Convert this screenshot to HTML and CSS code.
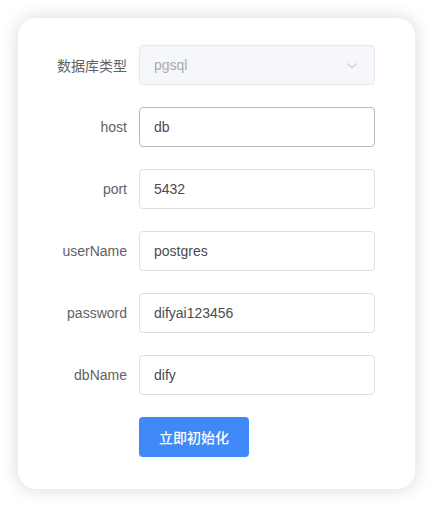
FILE: index.html
```html
<!DOCTYPE html>
<html lang="zh">
<head>
<meta charset="utf-8">
<link rel="stylesheet" href="styles.css">
</head>
<body>
<div class="card">
  <form class="form">
    <div class="row">
      <label class="label">数据库类型</label>
      <div class="field select">
        <span class="value">pgsql</span>
        <svg class="chev" width="12" height="12" viewBox="0 0 12 12"><path d="M1 4.5 L6 8.5 L11 4.5" fill="none" stroke="#b8bcc4" stroke-width="1"/></svg>
      </div>
    </div>
    <div class="row">
      <label class="label">host</label>
      <div class="field focus"><span class="value">db</span></div>
    </div>
    <div class="row">
      <label class="label">port</label>
      <div class="field"><span class="value">5432</span></div>
    </div>
    <div class="row">
      <label class="label">userName</label>
      <div class="field"><span class="value">postgres</span></div>
    </div>
    <div class="row">
      <label class="label">password</label>
      <div class="field"><span class="value">difyai123456</span></div>
    </div>
    <div class="row">
      <label class="label">dbName</label>
      <div class="field"><span class="value">dify</span></div>
    </div>
    <div class="row">
      <span class="label"></span>
      <button type="button" class="btn">立即初始化</button>
    </div>
  </form>
</div>
</body>
</html>
```
FILE: styles.css
```css
html, body {
  margin: 0;
  background: #ffffff;
}
body {
  padding: 18px;
  font-family: "Liberation Sans", "Noto Sans CJK SC", sans-serif;
}
.card {
  box-sizing: border-box;
  width: 397px;
  height: 471px;
  border-radius: 18px;
  background: #fff;
  box-shadow: 0 0 18px rgba(0, 0, 0, 0.16);
  padding: 27px 40px 30px 0;
}
.form {
  display: flex;
  flex-direction: column;
  gap: 22px;
}
.row {
  display: flex;
  align-items: center;
  gap: 12px;
  height: 40px;
}
.label {
  width: 109px;
  flex: none;
  text-align: right;
  font-size: 14px;
  color: #606266;
}
.field {
  box-sizing: border-box;
  flex: 1;
  height: 40px;
  border: 1px solid #dcdfe6;
  border-radius: 4px;
  display: flex;
  align-items: center;
  padding: 0 14px;
  font-size: 14px;
  color: #4a4c50;
  background: #fff;
}
.field.focus {
  border-color: #b6b9c1;
}
.select {
  background: #f5f7fa;
  border-color: #e4e7ed;
  color: #a8abb2;
  justify-content: space-between;
  padding-right: 16px;
}
.chev {
  display: block;
}
.btn {
  box-sizing: border-box;
  width: 110px;
  height: 40px;
  border: none;
  border-radius: 4px;
  background: #4089f8;
  color: #fff;
  font-family: "Noto Sans CJK SC", sans-serif;
  font-size: 14px;
  font-weight: 500;
  padding: 0;
}
```
